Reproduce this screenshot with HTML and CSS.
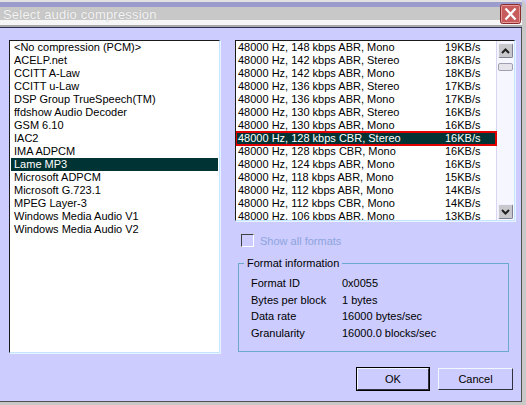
FILE: index.html
```html
<!DOCTYPE html>
<html lang="en">
<head>
    <meta charset="UTF-8">
    <title>Select audio compression</title>
    <link rel="stylesheet" href="styles.css">
</head>
<body>
    <div class="window">
        <div class="titlebar">
            <span class="title">Select audio compression</span>
            <span class="close">
                <svg width="21" height="20" viewBox="0 0 21 20">
                    <rect x="0.5" y="0.5" width="20" height="19" rx="2" fill="#c85c5c" stroke="#8a2c2c"/>
                    <rect x="1.5" y="1.5" width="18" height="17" rx="1" fill="none" stroke="#e49a9a"/>
                    <path d="M5.5 4.5 L15.5 15.5 M15.5 4.5 L5.5 15.5" stroke="#ffffff" stroke-width="2.2"/>
                </svg>
            </span>
        </div>

        <div class="client">
            <!-- codec list -->
            <div class="listbox codec-list">
                <div class="item">&lt;No compression (PCM)&gt;</div>
                <div class="item">ACELP.net</div>
                <div class="item">CCITT A-Law</div>
                <div class="item">CCITT u-Law</div>
                <div class="item">DSP Group TrueSpeech(TM)</div>
                <div class="item">ffdshow Audio Decoder</div>
                <div class="item">GSM 6.10</div>
                <div class="item">IAC2</div>
                <div class="item">IMA ADPCM</div>
                <div class="item selected">Lame MP3</div>
                <div class="item">Microsoft ADPCM</div>
                <div class="item">Microsoft G.723.1</div>
                <div class="item">MPEG Layer-3</div>
                <div class="item">Windows Media Audio V1</div>
                <div class="item">Windows Media Audio V2</div>
            </div>

            <div class="right-col">
                <!-- format list -->
                <div class="listbox format-list">
                    <div class="rows">
                        <div class="row"><span>48000 Hz, 148 kbps ABR, Mono</span><span class="rate">19KB/s</span></div>
                        <div class="row"><span>48000 Hz, 142 kbps ABR, Stereo</span><span class="rate">18KB/s</span></div>
                        <div class="row"><span>48000 Hz, 142 kbps ABR, Mono</span><span class="rate">18KB/s</span></div>
                        <div class="row"><span>48000 Hz, 136 kbps ABR, Stereo</span><span class="rate">17KB/s</span></div>
                        <div class="row"><span>48000 Hz, 136 kbps ABR, Mono</span><span class="rate">17KB/s</span></div>
                        <div class="row"><span>48000 Hz, 130 kbps ABR, Stereo</span><span class="rate">16KB/s</span></div>
                        <div class="row"><span>48000 Hz, 130 kbps ABR, Mono</span><span class="rate">16KB/s</span></div>
                        <div class="row selected"><span>48000 Hz, 128 kbps CBR, Stereo</span><span class="rate">16KB/s</span></div>
                        <div class="row"><span>48000 Hz, 128 kbps CBR, Mono</span><span class="rate">16KB/s</span></div>
                        <div class="row"><span>48000 Hz, 124 kbps ABR, Mono</span><span class="rate">16KB/s</span></div>
                        <div class="row"><span>48000 Hz, 118 kbps ABR, Mono</span><span class="rate">15KB/s</span></div>
                        <div class="row"><span>48000 Hz, 112 kbps ABR, Mono</span><span class="rate">14KB/s</span></div>
                        <div class="row"><span>48000 Hz, 112 kbps CBR, Mono</span><span class="rate">14KB/s</span></div>
                        <div class="row"><span>48000 Hz, 106 kbps ABR, Mono</span><span class="rate">13KB/s</span></div>
                    </div>
                    <div class="scrollbar">
                        <div class="sb-btn">
                            <svg width="9" height="6" viewBox="0 0 9 6"><path d="M1 5 L4.5 1.5 L8 5" fill="none" stroke="#202020" stroke-width="2"/></svg>
                        </div>
                        <div class="sb-thumb"></div>
                        <div class="sb-space"></div>
                        <div class="sb-btn">
                            <svg width="9" height="6" viewBox="0 0 9 6"><path d="M1 1 L4.5 4.5 L8 1" fill="none" stroke="#202020" stroke-width="2"/></svg>
                        </div>
                    </div>
                </div>

                <label class="check">
                    <span class="box"></span>
                    <span class="check-text">Show all formats</span>
                </label>

                <!-- format info group -->
                <div class="group">
                    <span class="legend">Format information</span>
                    <div class="info-row"><span class="key">Format ID</span><span>0x0055</span></div>
                    <div class="info-row"><span class="key">Bytes per block</span><span>1 bytes</span></div>
                    <div class="info-row"><span class="key">Data rate</span><span>16000 bytes/sec</span></div>
                    <div class="info-row"><span class="key">Granularity</span><span>16000.0 blocks/sec</span></div>
                </div>

                <div class="buttons">
                    <button class="btn default">OK</button>
                    <button class="btn">Cancel</button>
                </div>
            </div>
        </div>
    </div>
</body>
</html>
```

FILE: styles.css
```css
* {
    box-sizing: border-box;
}
body {
    margin: 0;
    font-family: 'Liberation Sans', Arial, sans-serif;
    font-size: 11px;
    color: #000;
    background: #ccccff;
}
.window {
    width: 526px;
    height: 405px;
    background: #c8c8c8;
    border-top-right-radius: 6px;
    overflow: hidden;
}
.titlebar {
    width: 522px;
    height: 28px;
    display: flex;
    align-items: flex-start;
    justify-content: space-between;
    background: linear-gradient(to bottom,
        #e2e2e2 0 2px,
        #9c9ccc 2px 7px,
        #c8c8c8 7px 20px,
        #f6f6f6 20px 25px,
        #a8a8a8 25px 27px,
        #303050 27px 28px);
}
.title {
    font-size: 13px;
    letter-spacing: 0.2px;
    color: #f4f4f4;
    text-shadow: 0 0 1px #b0b0b0;
    padding: 7px 0 0 3px;
    line-height: 15px;
}
.close {
    margin: 4px 1px 0 0;
    height: 20px;
}
.close svg {
    display: block;
}
.client {
    width: 522px;
    height: 374px;
    background: #ccccff;
    border-right: 1px solid #505050;
    border-bottom: 1px solid #505050;
    display: flex;
    gap: 15px;
    padding: 12px 6px 0 9px;
}
.listbox {
    background: #fff;
    border: 1px solid;
    border-color: #1a1a1a #c4e4ff #c4e4ff #1a1a1a;
    box-shadow: 1px 1px 0 #e8f4ff;
}
.codec-list {
    width: 211px;
    height: 313px;
    padding: 0 1px;
}
.item {
    height: 13px;
    line-height: 13px;
    padding-left: 3px;
    white-space: nowrap;
}
.item.selected, .row.selected {
    background: #003333;
    color: #fff;
}
.right-col {
    width: 280px;
    display: flex;
    flex-direction: column;
}
.format-list {
    height: 181px;
    display: flex;
    overflow: hidden;
}
.rows {
    flex: 1;
}
.row {
    height: 13px;
    line-height: 13px;
    display: flex;
    padding-left: 2px;
    white-space: nowrap;
}
.row .rate {
    margin-left: auto;
    width: 51px;
}
.row.selected {
    outline: 2px solid #e00000;
    outline-offset: -1px;
    height: 13px;
    position: relative;
}
.scrollbar {
    width: 18px;
    background: #f6f6ff;
    border-left: 1px solid #d6d6f4;
    display: flex;
    flex-direction: column;
    padding: 2px 1px 1px 1px;
}
.sb-btn {
    height: 15px;
    background: #c8c8cc;
    border: 1px solid;
    border-color: #f0f0ff #808090 #808090 #f0f0ff;
    border-radius: 2px;
    display: flex;
    align-items: center;
    justify-content: center;
}
.sb-thumb {
    height: 8px;
    margin-top: 5px;
    background: #e4e4ea;
    border: 1px solid #a0a0b0;
    border-radius: 2px;
}
.sb-space {
    flex: 1;
}
.check {
    display: flex;
    align-items: center;
    height: 13px;
    margin: 13px 0 0 6px;
}
.box {
    width: 13px;
    height: 13px;
    border: 1px solid;
    border-color: #404040 #ffffff #ffffff #404040;
    background: #ccccff;
}
.check-text {
    margin-left: 6px;
    color: #8ea4dc;
}
.group {
    position: relative;
    width: 271px;
    height: 89px;
    margin: 16px 0 0 3px;
    border: 1px solid #6aa8d0;
    padding: 11px 0 0 12px;
}
.legend {
    position: absolute;
    top: -7px;
    left: 5px;
    padding: 0 3px;
    background: #ccccff;
    line-height: 13px;
}
.info-row {
    display: flex;
    height: 16.5px;
    line-height: 16px;
}
.key {
    width: 91px;
}
.buttons {
    display: flex;
    justify-content: flex-end;
    gap: 9px;
    margin-top: 16px;
    padding-right: 2px;
}
.btn {
    font-family: inherit;
    font-size: 11px;
    color: #000;
    background: #ccccff;
    height: 22px;
    width: 75px;
    border: 1px solid;
    border-color: #f2f8ff #303040 #303040 #f2f8ff;
    padding: 0;
}
.btn.default {
    width: 72px;
    outline: 1px solid #000;
}
```
